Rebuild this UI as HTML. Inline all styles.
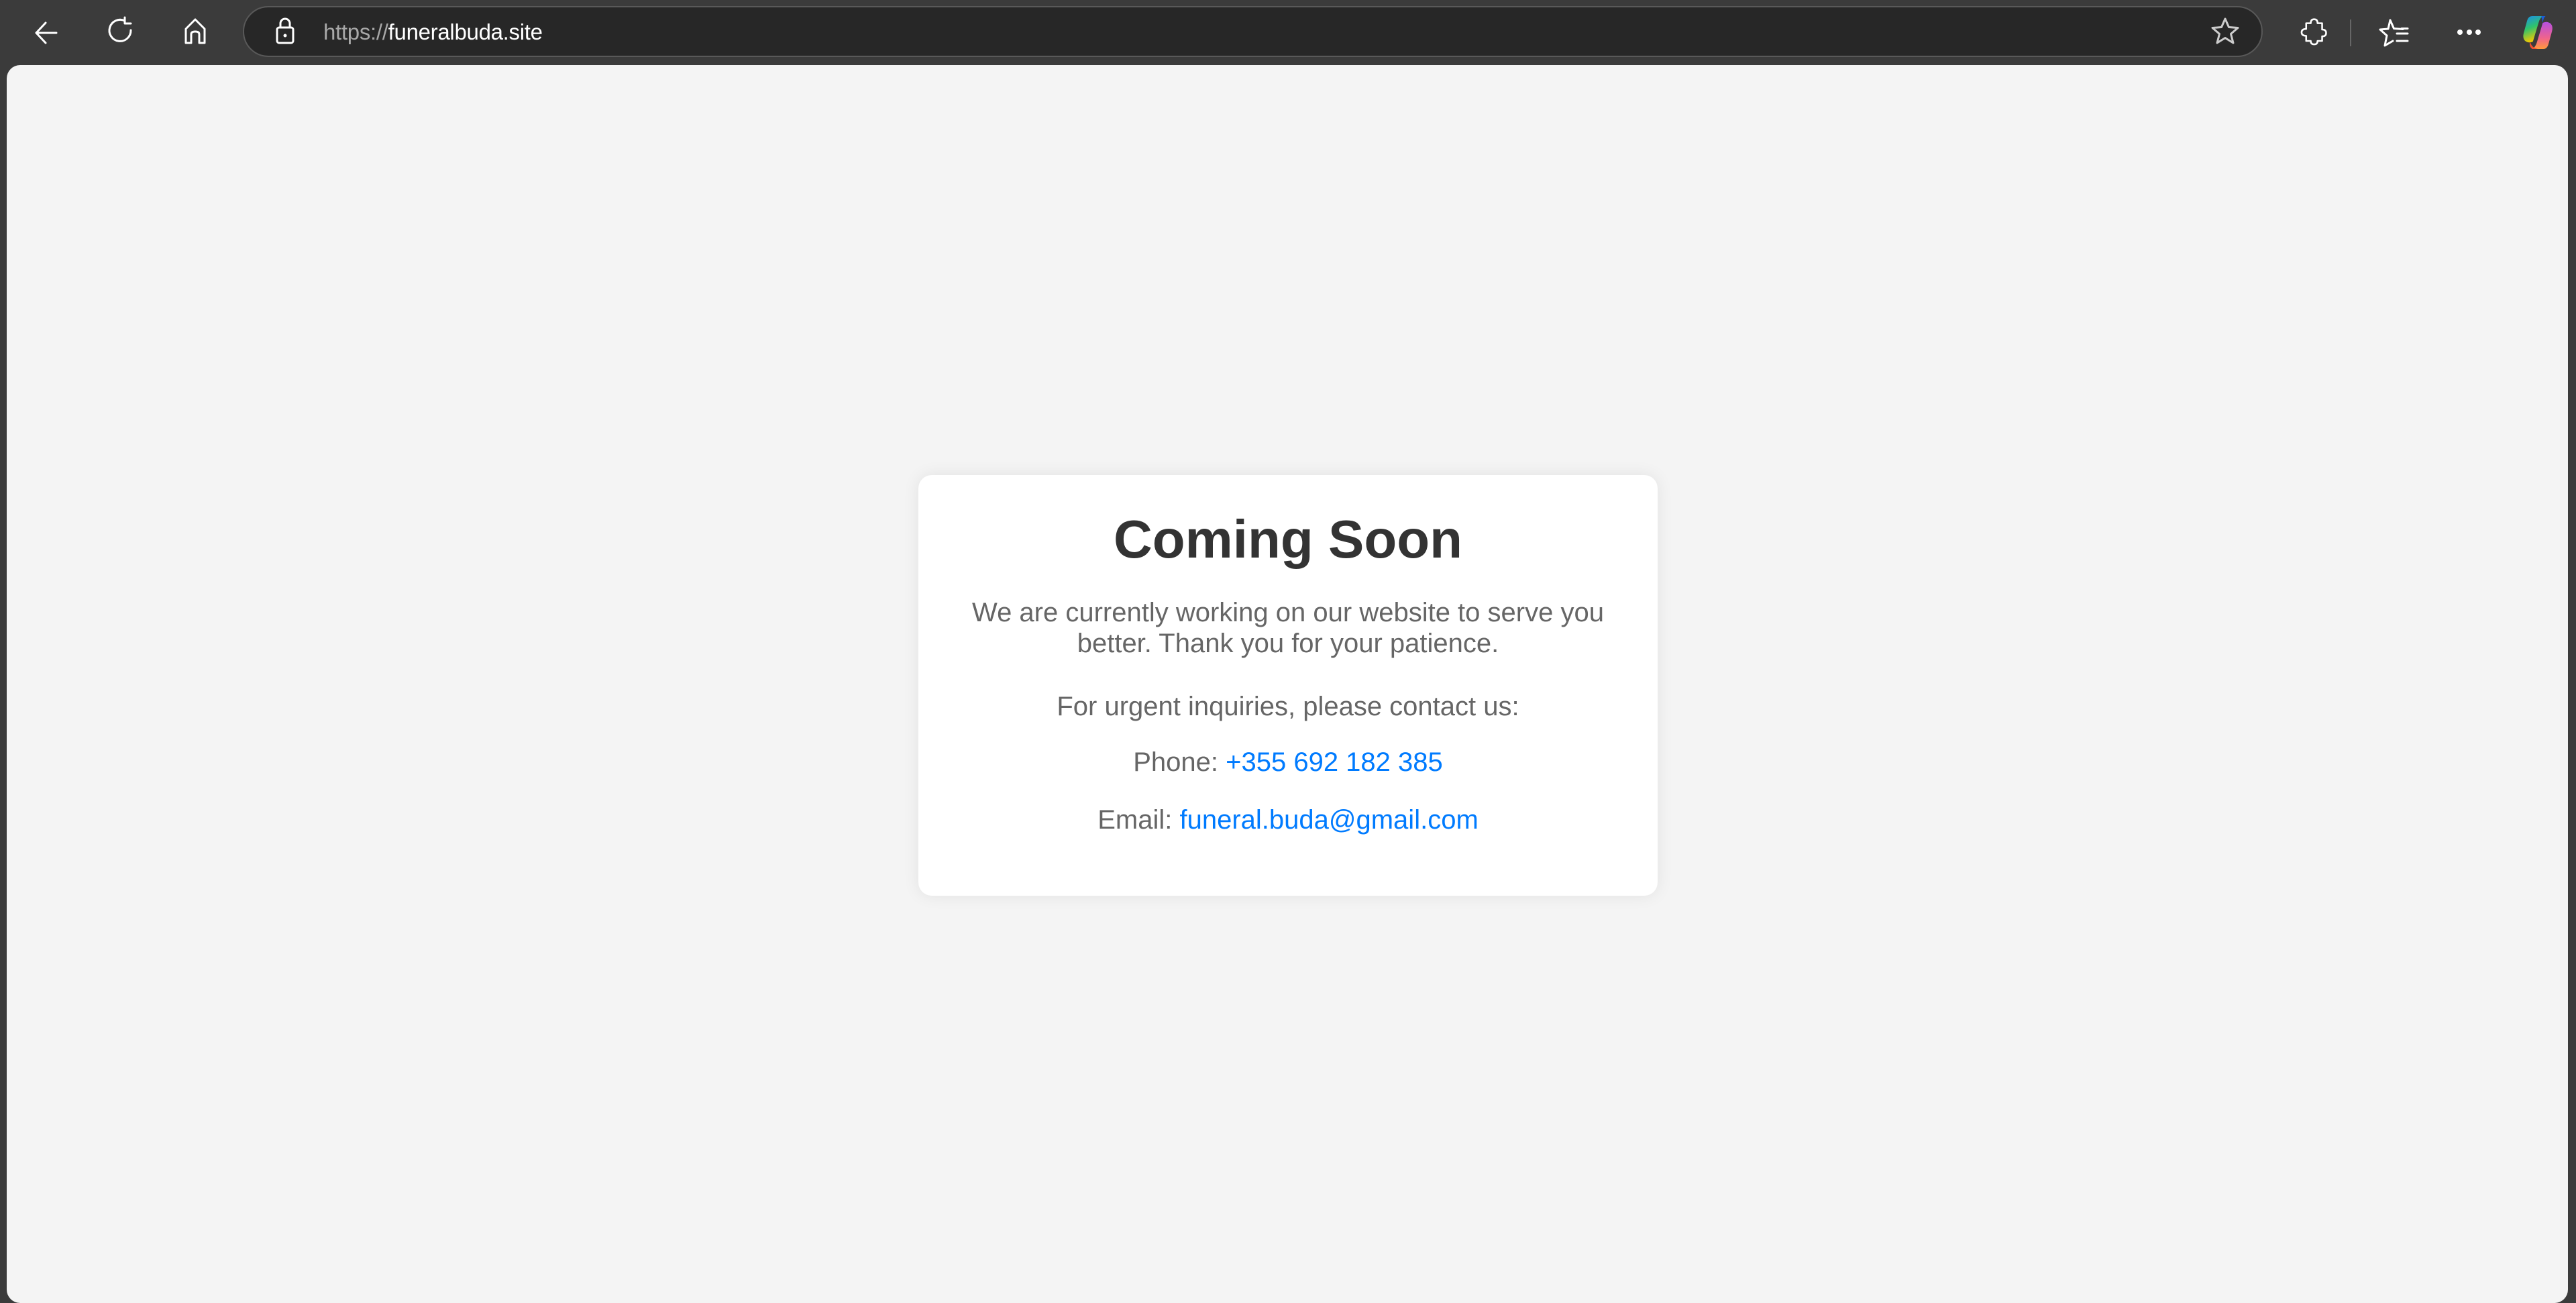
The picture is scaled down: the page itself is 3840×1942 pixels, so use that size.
<!DOCTYPE html>
<html><head><meta charset="utf-8"><style>
html,body{margin:0;padding:0;width:3840px;height:1942px;overflow:hidden;background:#3b3b3b;font-family:"Liberation Sans",Arial,sans-serif;}
.abs{position:absolute}
#content{position:absolute;left:10px;top:97px;width:3818px;height:1845px;background:#f4f4f4;border-radius:20px 20px 20px 20px;}
#addr{position:absolute;left:362px;top:9px;width:3011px;height:76px;border-radius:40px;background:#272727;border:2px solid #595959;box-sizing:border-box}
#url{position:absolute;left:482px;top:28px;font-size:33px;line-height:40px;color:#a8a8a8;letter-spacing:-0.3px}
#url b{font-weight:normal;color:#fff}
#card{position:absolute;left:1369px;top:708px;width:1102px;height:627px;background:#fff;border-radius:20px;box-shadow:0 0 25px rgba(0,0,0,0.08);text-align:center}
.t{position:absolute;left:0;width:100%;text-align:center;color:#666;font-size:40px;line-height:46px}
a{color:#007bff;text-decoration:none}
svg{position:absolute;overflow:visible}
</style></head><body>
<svg style="left:44px;top:24px" width="50" height="50" viewBox="0 0 50 50"><path d="M40 25H10M24 10L10 25L24 40" stroke="#fff" stroke-width="3" fill="none" stroke-linecap="round" stroke-linejoin="round"/></svg>
<svg style="left:155px;top:22px" width="50" height="50" viewBox="0 0 50 50"><path d="M31 9A16 16 0 1 0 40 23" stroke="#fff" stroke-width="3" fill="none" stroke-linecap="round"/><path d="M31 4V13H40" stroke="#fff" stroke-width="3" fill="none" stroke-linecap="round" stroke-linejoin="round"/></svg>
<svg style="left:266px;top:22px" width="50" height="50" viewBox="0 0 50 50"><path d="M11 42V21L25 7L39 21V42H31V29Q31 25 25 25Q19 25 19 29V42Z" stroke="#fff" stroke-width="3" fill="none" stroke-linejoin="round"/></svg>
<div id="addr"></div>
<svg style="left:410px;top:24px" width="30" height="44" viewBox="0 0 30 44"><rect x="3" y="17" width="24" height="23" rx="3" stroke="#fff" stroke-width="3" fill="none"/><path d="M8 17V11A7 7 0 0 1 22 11V17" stroke="#fff" stroke-width="3" fill="none"/><circle cx="15" cy="29" r="2.5" fill="#fff"/></svg>
<div id="url">https://<b>funeralbuda.site</b></div>
<svg style="left:3294px;top:24px" width="46" height="46" viewBox="0 0 46 46"><path d="M23 4L28.5 16.5L42 17.5L31.5 26.5L35 40L23 32.5L11 40L14.5 26.5L4 17.5L17.5 16.5Z" stroke="#ccc" stroke-width="3" fill="none" stroke-linejoin="round"/></svg>
<svg style="left:3425px;top:27px" width="50" height="46" viewBox="0 0 50 46"><path d="M12 9H20Q20 2 26 2Q32 2 32 9H40V20Q47 20 47 26Q47 32 40 32V40H32Q32 46 26 46Q20 46 20 40H12V31Q4 31 4 25Q4 19 12 19Z" stroke="#fff" stroke-width="3" fill="none" stroke-linejoin="round" transform="scale(0.85) translate(3,0)"/></svg>
<div class="abs" style="left:3503px;top:29px;width:2px;height:40px;background:#666"></div>
<svg style="left:3544px;top:28px" width="56" height="42" viewBox="0 0 56 42"><path d="M19 2L24.5 14.5L38 15.5M14 25L4 16L16 15L19 2M14 25L11 40L23 33" stroke="#fff" stroke-width="3" fill="none" stroke-linejoin="round" stroke-linecap="round"/><path d="M29 22H45M29 33H45M36 14.5H45" stroke="#fff" stroke-width="3" stroke-linecap="round"/></svg>
<div class="abs" style="left:3663px;top:44px;width:8px;height:8px;border-radius:50%;background:#fff"></div>
<div class="abs" style="left:3677px;top:44px;width:8px;height:8px;border-radius:50%;background:#fff"></div>
<div class="abs" style="left:3690px;top:44px;width:8px;height:8px;border-radius:50%;background:#fff"></div>
<svg style="left:3762px;top:22px" width="44" height="52" viewBox="0 0 44 52"><defs><linearGradient id="g1" x1="0" y1="0" x2="0.3" y2="1"><stop offset="0" stop-color="#1a8cf0"/><stop offset="0.5" stop-color="#2fc46b"/><stop offset="1" stop-color="#f5c800"/></linearGradient><linearGradient id="g2" x1="0.5" y1="0" x2="0.5" y2="1"><stop offset="0" stop-color="#b44fe0"/><stop offset="0.6" stop-color="#f0648c"/><stop offset="1" stop-color="#ff9a3c"/></linearGradient></defs><g transform="translate(-2,0) scale(1.05,1)"><path d="M14 2H30Q25 4 23 12L15 40Q9 43 4 39Q0 35 2 27L7 8Q9 2 14 2Z" fill="url(#g1)"/><path d="M30 51H14Q19 48 21 40L29 12Q35 9 40 13Q44 17 42 25L37 44Q35 51 30 51Z" fill="url(#g2)"/><path d="M11 40Q13 49 22 51H14Q9 47 11 40Z" fill="#f05030"/><path d="M33 2Q30 4 29 12L27 2Z" fill="#1b5ed8"/></g></svg>
<div id="content"></div>
<div id="card">
<div class="t" style="top:50px;font-size:80px;line-height:92px;font-weight:bold;color:#333">Coming Soon</div>
<div class="t" style="top:182px">We are currently working on our website to serve you<br>better. Thank you for your patience.</div>
<div class="t" style="top:322px">For urgent inquiries, please contact us:</div>
<div class="t" style="top:405px">Phone: <a>+355 692 182 385</a></div>
<div class="t" style="top:491px">Email: <a>funeral.buda@gmail.com</a></div>
</div>
</body></html>
